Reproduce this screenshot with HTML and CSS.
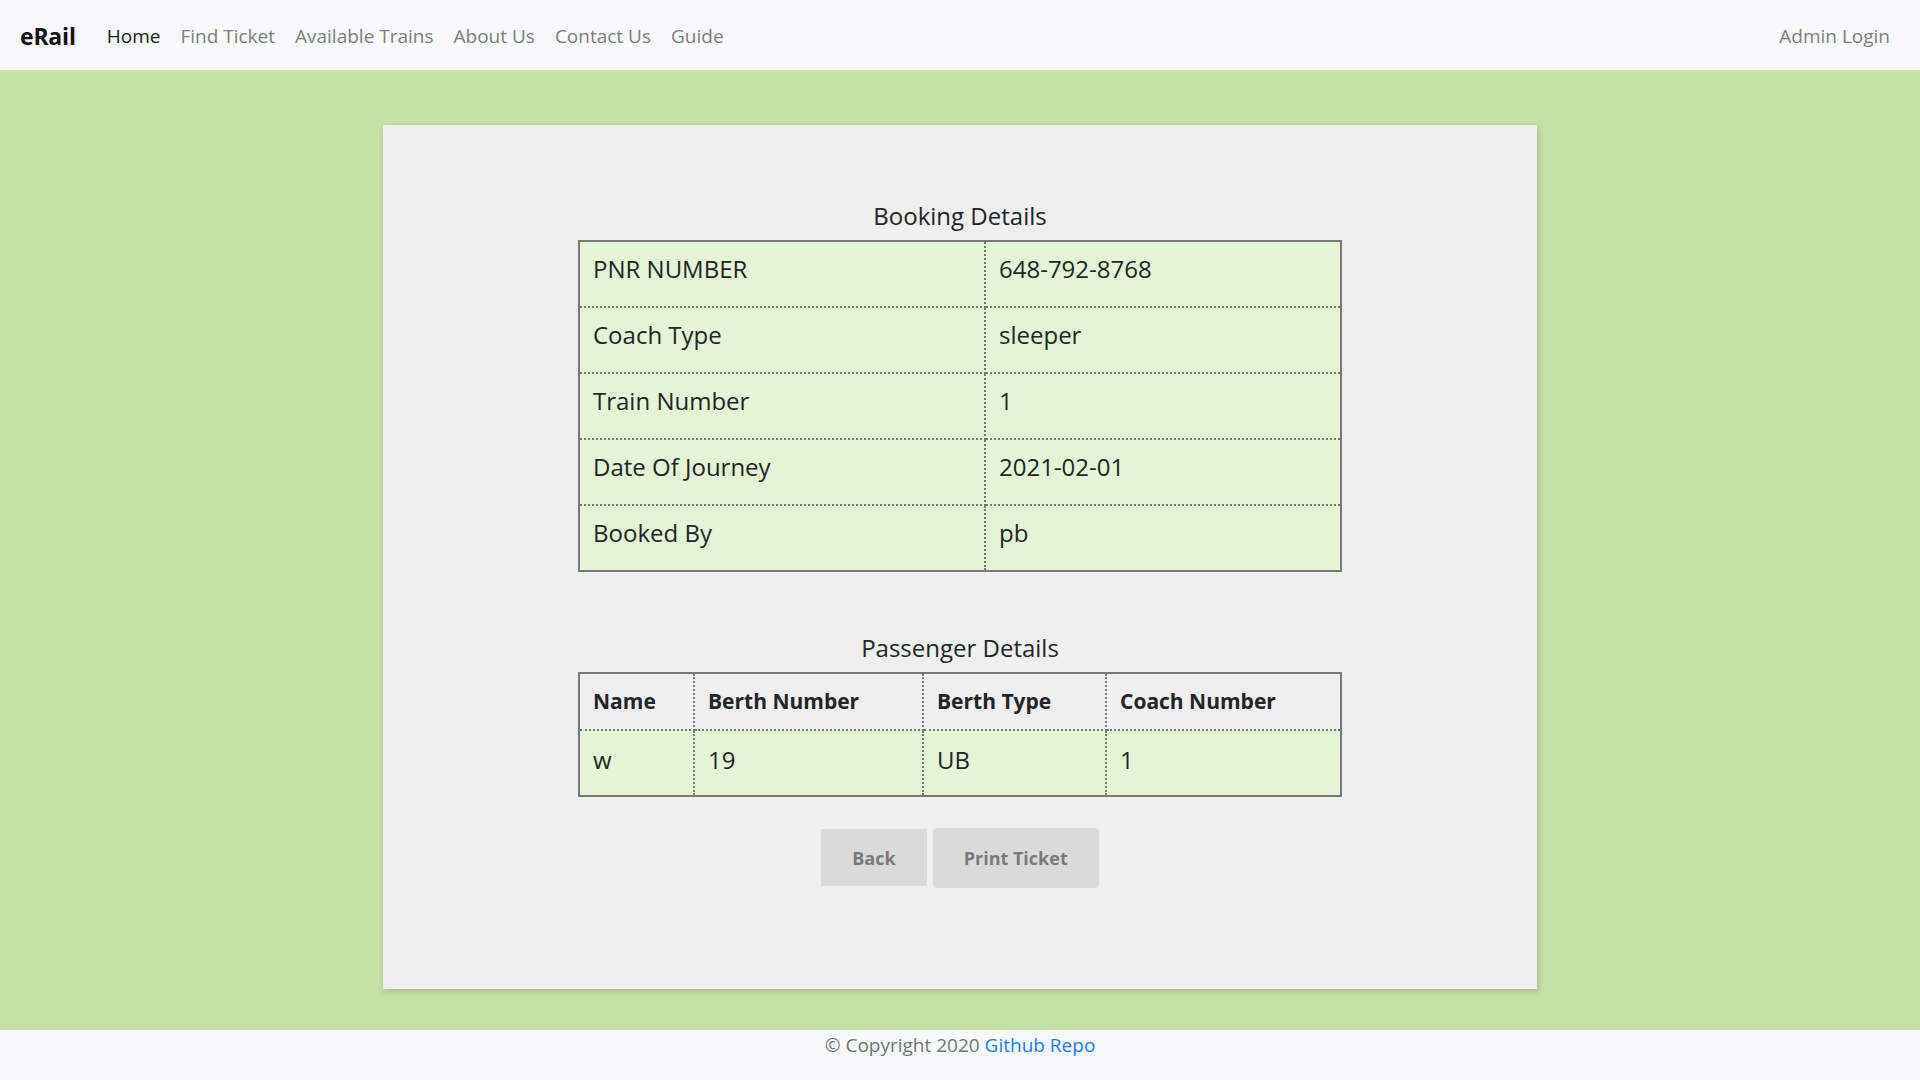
FILE: index.html
```html
<!DOCTYPE html>
<html lang="en">
<head>
<meta charset="utf-8">
<title>eRail - Booking Details</title>
<link rel="stylesheet" href="styles.css">
</head>
<body>
<nav class="navbar">
  <a class="brand" href="#">eRail</a>
  <ul class="nav-links">
    <li><a class="nav-link active" href="#">Home</a></li>
    <li><a class="nav-link" href="#">Find Ticket</a></li>
    <li><a class="nav-link" href="#">Available Trains</a></li>
    <li><a class="nav-link" href="#">About Us</a></li>
    <li><a class="nav-link" href="#">Contact Us</a></li>
    <li><a class="nav-link" href="#">Guide</a></li>
  </ul>
  <a class="nav-link admin" href="#">Admin Login</a>
</nav>

<main class="page">
  <section class="card">
    <h4 class="section-title">Booking Details</h4>
    <table class="tbl booking">
      <colgroup><col class="col-label"><col></colgroup>
      <tr><td>PNR NUMBER</td><td>648-792-8768</td></tr>
      <tr><td>Coach Type</td><td>sleeper</td></tr>
      <tr><td>Train Number</td><td>1</td></tr>
      <tr><td>Date Of Journey</td><td>2021-02-01</td></tr>
      <tr><td>Booked By</td><td>pb</td></tr>
    </table>

    <h4 class="section-title second">Passenger Details</h4>
    <table class="tbl passengers">
      <colgroup><col class="c1"><col class="c2"><col class="c3"><col class="c4"></colgroup>
      <tr class="head"><th>Name</th><th>Berth Number</th><th>Berth Type</th><th>Coach Number</th></tr>
      <tr><td>w</td><td>19</td><td>UB</td><td>1</td></tr>
    </table>

    <div class="actions">
      <button class="btn btn-back">Back</button>
      <button class="btn btn-print">Print Ticket</button>
    </div>
  </section>
</main>

<footer class="footer">
  © Copyright 2020 <a href="#" class="repo">Github Repo</a>
</footer>
</body>
</html>
```

FILE: styles.css
```css
* { box-sizing: border-box; }

html, body {
  margin: 0;
  padding: 0;
}

body {
  font-family: "Open Sans", "Noto Sans", "Liberation Sans", sans-serif;
  color: #212529;
  background: #f8f9fa;
}

a { text-decoration: none; }

.navbar {
  height: 70px;
  background: #f8f9fa;
  display: flex;
  align-items: center;
  padding: 2px 20px 0;
}

.brand {
  font-size: 23px;
  font-weight: 700;
  color: #111;
  margin-right: 21px;
  letter-spacing: -0.2px;
}

.nav-links {
  list-style: none;
  margin: 0;
  padding: 0;
  display: flex;
  flex: 1;
}

.nav-link {
  display: block;
  font-size: 19px;
  padding: 10px 10px;
  color: #7d7e7f;
}

.nav-link.active { color: #1a1a1a; }

.admin { padding-right: 10px; }

.page {
  background: #c5e1a5;
  height: 960px;
  padding-top: 55px;
}

.card {
  width: 1154px;
  height: 864px;
  margin: 0 auto;
  background: #efefef;
  box-shadow: 1px 2px 6px rgba(0, 0, 0, 0.18);
  padding-top: 75px;
  display: flex;
  flex-direction: column;
  align-items: center;
}

.section-title {
  margin: 0 0 8px;
  font-size: 24px;
  font-weight: 400;
  line-height: 32px;
  color: #212529;
}

.section-title.second { margin-top: 60px; }

.tbl {
  border-collapse: collapse;
  width: 764px;
  border: 2px solid #787878;
  font-size: 24px;
}

.tbl td, .tbl th {
  border: 2px dotted #787878;
  padding: 0 13px;
  height: 66px;
  text-align: left;
  vertical-align: middle;
  background: #e3f5d4;
  color: #212529;
}

.booking td { padding-bottom: 12px; }

.col-label { width: 406px; }

.passengers .c1 { width: 115px; }
.passengers .c2 { width: 229px; }
.passengers .c3 { width: 183px; }

.passengers th {
  background: #efefef;
  font-weight: 700;
  font-size: 21px;
  height: 57px;
  padding-bottom: 2px;
}

.passengers td { height: 66px; padding-bottom: 8px; }

.actions {
  display: flex;
  gap: 6px;
  margin-top: 31px;
  align-items: flex-start;
}

.btn {
  font-family: inherit;
  font-size: 18px;
  font-weight: 700;
  color: #7a7a7a;
  background: #dadada;
  border: none;
  padding: 0 31px;
  cursor: pointer;
}

.btn-back {
  height: 57px;
  margin-top: 1px;
  border-radius: 0;
}

.btn-print {
  height: 60px;
  border-radius: 4px;
}

.footer {
  height: 50px;
  background: #f8f9fa;
  text-align: center;
  font-size: 19px;
  line-height: 30px;
  padding-top: 0;
  color: #6c757d;
}

.repo { color: #1a7cf5; }
```
